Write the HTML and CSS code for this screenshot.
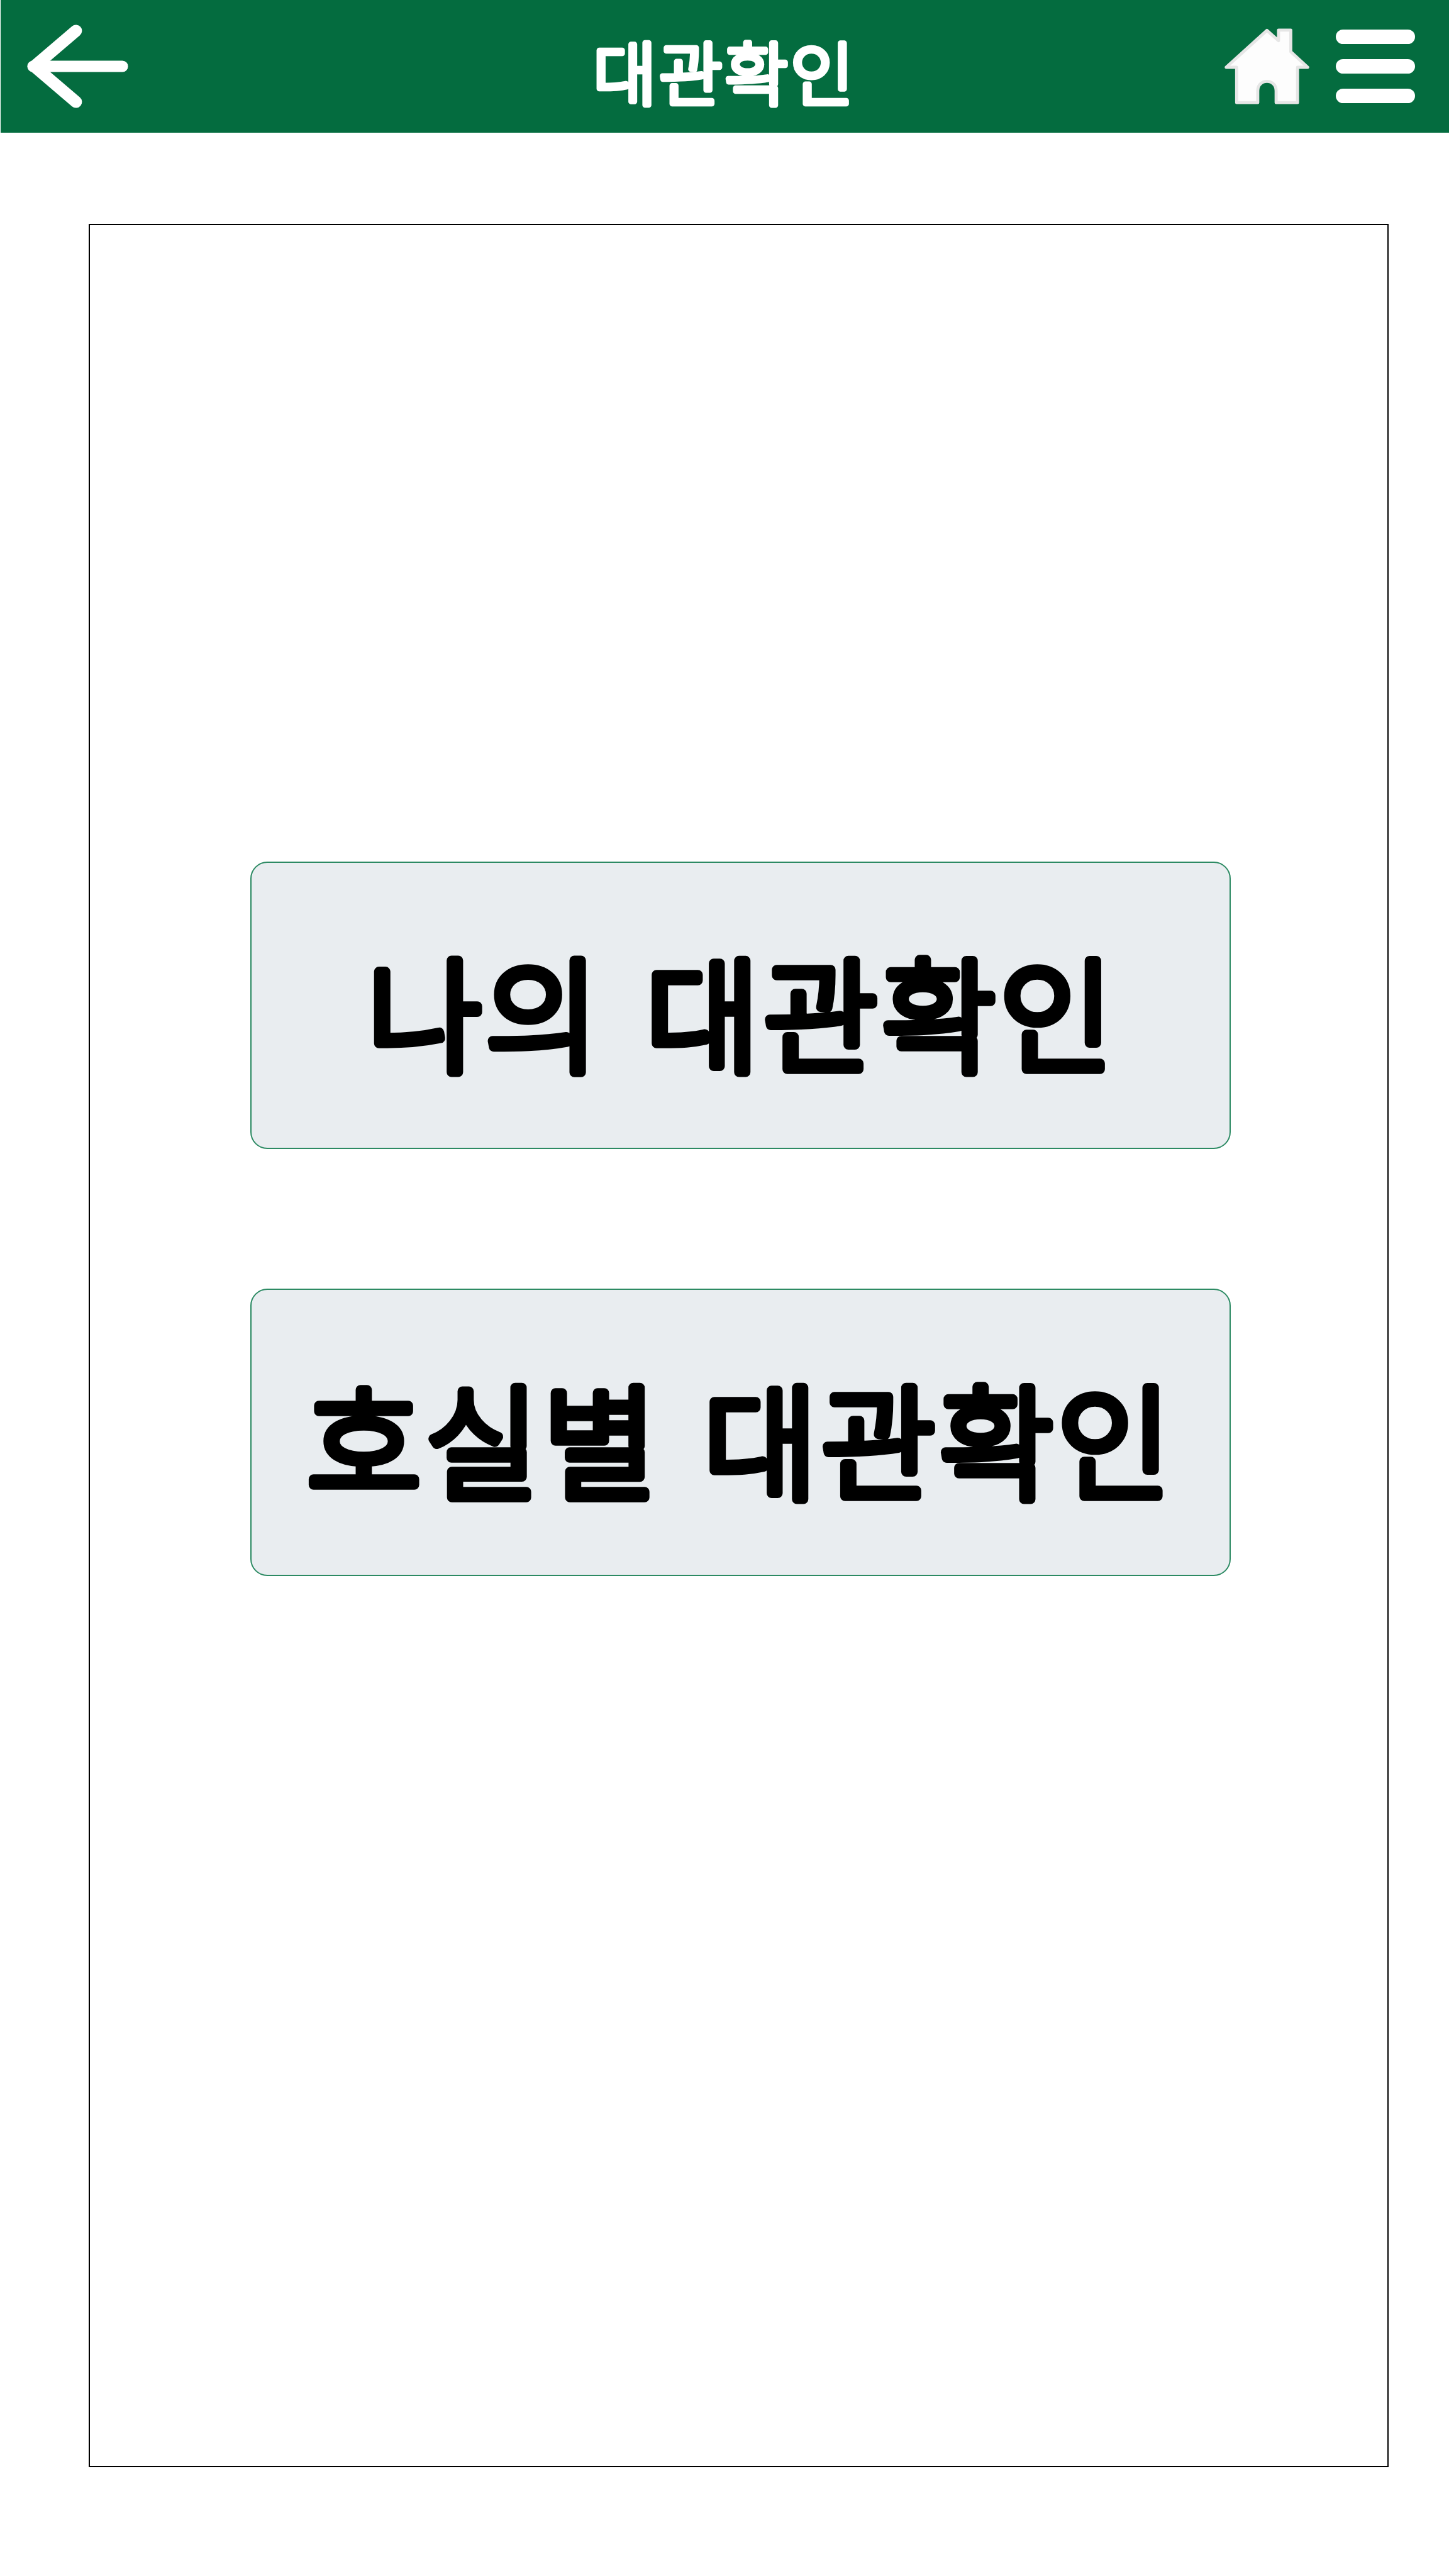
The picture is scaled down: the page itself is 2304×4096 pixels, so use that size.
FILE: index.html
```html
<!DOCTYPE html>
<html lang="ko">
<head>
<meta charset="utf-8">
<title>대관확인</title>
<link rel="stylesheet" href="styles.css">
</head>
<body>
<header class="topbar">
  <a class="back" aria-label="뒤로">
    <svg class="icon-back" viewBox="54 50 216 176">
      <path d="M68.7 138H254" stroke-width="23.6"/>
      <path d="M157.8 64.4L71.5 138L157.8 211.6" stroke-width="25"/>
    </svg>
  </a>
  <h1 class="title">
    <svg class="title-text" viewBox="0 0 430 211"><text x="217" y="159">대관확인</text></svg>
  </h1>
  <nav class="actions">
    <svg class="icon-home" viewBox="160 176 534 480">
      <path d="M174 422L427 193L499 257V191H575V325L680 422H617V641H484V567C484 490 370 490 370 567V641H239V422Z"/>
    </svg>
    <span class="menu"><i></i><i></i><i></i></span>
  </nav>
</header>
<main class="panel">
  <a class="choice"><svg class="label" viewBox="0 0 1555 453"><text x="780" y="318">나의 대관확인</text></svg></a>
  <a class="choice"><svg class="label" viewBox="0 0 1555 453"><text x="778" y="318">호실별 대관확인</text></svg></a>
</main>
</body>
</html>
```
FILE: styles.css
```css
* { box-sizing: border-box; }

body {
  margin: 0;
  width: 2304px;
  height: 4096px;
  background: #fff;
  font-family: "Noto Sans CJK KR", sans-serif;
  overflow: hidden;
}

.topbar {
  display: grid;
  grid-template-columns: 1fr auto 1fr;
  align-items: center;
  height: 211px;
  margin-left: 1px;
  padding: 0 54px 0 40px;
  background: #046c3f;
}

.back { display: flex; }

.icon-back {
  width: 166px;
  height: 135px;
  fill: none;
  stroke: #fff;
  stroke-linecap: round;
  stroke-linejoin: round;
}

.title {
  display: flex;
  margin: 0;
  padding-left: 9px;
  font-weight: 300;
}

/* A round-joined outline on a light weight gives the soft, heavy lettering. */
.title-text {
  width: 430px;
  height: 211px;
  fill: #fff;
  stroke: #fff;
  stroke-width: 8.5;
  stroke-linejoin: round;
  font-size: 110px;
  letter-spacing: 3.4px;
  text-anchor: middle;
}

.actions {
  display: flex;
  justify-content: flex-end;
  align-items: center;
  gap: 41px;
}

.icon-home {
  width: 137px;
  height: 123px;
  fill: #fdfdfd;
  stroke: #e6e6e6;
  stroke-width: 19;
  stroke-linejoin: round;
}

.menu {
  display: flex;
  flex-direction: column;
  gap: 24px;
  width: 126px;
}

.menu i {
  height: 23px;
  border-radius: 12px;
  background: #fff;
}

.panel {
  display: flex;
  flex-direction: column;
  gap: 222px;
  width: 2067px;
  height: 3567px;
  margin: 145px 0 0 141px;
  padding: 1012px 0 0 255px;
  border: 2px solid #000;
}

.choice {
  display: flex;
  width: 1559px;
  height: 457px;
  border: 2px solid #2c8a63;
  border-radius: 27px;
  background: #e9edf0;
}

.label {
  width: 1555px;
  height: 453px;
  fill: #000;
  stroke: #000;
  stroke-width: 15.5;
  stroke-linejoin: round;
  font-size: 198px;
  font-weight: 300;
  letter-spacing: 5.5px;
  word-spacing: 6px;
  text-anchor: middle;
}
```
